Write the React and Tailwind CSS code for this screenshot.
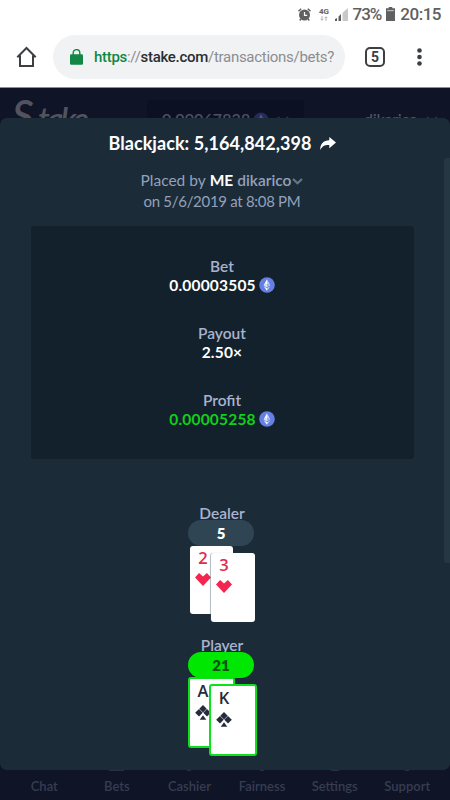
import React from 'react'

const stats = [
  { label: 'Bet', value: '0.00003505', coin: true, color: 'text-white' },
  { label: 'Payout', value: '2.50×', coin: false, color: 'text-white' },
  { label: 'Profit', value: '0.00005258', coin: true, color: 'text-[#10d01a]' },
]

const tabs = [
  { name: 'Chat' },
  { name: 'Bets', edge: 'w-[15px]' },
  { name: 'Cashier', edge: 'w-1' },
  { name: 'Fairness', edge: 'w-1' },
  { name: 'Settings', edge: 'w-2' },
  { name: 'Support', edge: 'w-1' },
]

function EthIcon() {
  return (
    <svg className="size-4 shrink-0" viewBox="0 0 16 16">
      <circle cx="8" cy="8" r="7.8" fill="#6580e3" />
      <path d="M8 2.2v4.6l3.4 1.6z" fill="#c4cff7" />
      <path d="M8 2.2L4.6 8.4 8 6.8z" fill="#fff" />
      <path d="M8 6.8L4.6 8.4 8 10.5z" fill="#dbe2fb" />
      <path d="M8 6.8v3.7l3.4-2.1z" fill="#a3b3f0" />
      <path d="M4.6 9.2L8 13.8v-2.6z" fill="#fff" />
      <path d="M11.4 9.2L8 13.8v-2.6z" fill="#c4cff7" />
    </svg>
  )
}

function Heart() {
  return (
    <svg className="mt-[3px] h-[13px] w-4 shrink-0" viewBox="0 0 16 13" fill="#f4254f">
      <path d="M4.1 0L8 3.4 11.9 0 16 4.5 8 13 0 4.5z" />
    </svg>
  )
}

function Club() {
  return (
    <svg className="mt-[2px] h-[15px] w-4 shrink-0" viewBox="0 0 16 15" fill="#262a3d">
      <path d="M8 0l3.7 3.7L8 7.4 4.3 3.7z" />
      <path d="M4 4.1l3.7 3.7L4 11.5.2 7.8z" />
      <path d="M12 4.1l3.8 3.7-3.8 3.7-3.7-3.7z" />
      <path d="M8 10.3l3.3 4.5H4.7z" />
    </svg>
  )
}

function Card({ rank, suit, className }) {
  return (
    <div className={`absolute rounded-[3px] bg-white ${className}`}>
      <div className="flex w-[26px] flex-col items-center">
        <span
          className={`font-['Open_Sans',sans-serif] text-[16.5px] leading-[24px] font-semibold ${
            suit === 'heart' ? 'text-[#e02b50]' : 'text-[#262a3d]'
          }`}
        >
          {rank}
        </span>
        {suit === 'heart' ? <Heart /> : <Club />}
      </div>
    </div>
  )
}

function StatusBar() {
  return (
    <div className="flex h-7 items-center justify-end pr-[9px] text-[#606060]">
      <svg className="mr-[8px] size-[13px]" viewBox="0 0 13 13">
        <circle cx="6.5" cy="7" r="5.5" fill="#606060" />
        <path d="M.5 3.2L3.2.8M12.5 3.2L9.8.8M2.8 11l-1 1.5M10.2 11l1 1.5" stroke="#606060" strokeWidth="1.5" />
        <path d="M6.5 3.9v3.4h2.7" stroke="#fff" strokeWidth="1.2" fill="none" />
      </svg>
      <div className="mr-[5px] flex w-[11px] flex-col items-center">
        <span className="text-[8px] leading-[8px] font-bold">4G</span>
        <svg className="h-[5px] w-2" viewBox="0 0 8 5" stroke="#aaa" strokeWidth=".9" fill="none">
          <path d="M2 0v4M.6 2.8L2 4.3l1.4-1.5M6 5V1M4.6 2.2L6 .7l1.4 1.5" />
        </svg>
      </div>
      <svg className="mr-[5px] h-[13px] w-[13px]" viewBox="0 0 13 13">
        <path d="M0 13v-2l2-1v3zM3.5 13V8.5L6 6v7z" fill="#606060" />
        <path d="M7.5 13V4.7L13 0v13z" fill="#c9c9c9" />
      </svg>
      <span className="mr-[5px] text-[17px] leading-none font-medium tracking-[-1px]">73%</span>
      <svg className="mr-[5px] h-[14px] w-[9px]" viewBox="0 0 9 14">
        <path d="M2.7 0h3.6v1.3H9V14H0V1.3h2.7z" fill="#606060" />
        <path d="M1.2 3h6.6v1.2H1.2z" fill="#b9b9b9" />
      </svg>
      <span className="text-[17px] leading-none font-medium tracking-[-0.5px]">20:15</span>
    </div>
  )
}

function AddressBar() {
  return (
    <div className="flex h-[58px] items-center">
      <svg className="ml-[16px] h-[22px] w-[21px] shrink-0" viewBox="0 0 21 22" fill="none" stroke="#3c4043" strokeWidth="2">
        <path d="M1.3 11.2L10.5 2l9.2 9.2M4 9.5V20h13V9.5" />
      </svg>
      <div className="ml-4 flex h-11 w-[292px] shrink-0 items-center rounded-full bg-[#f1f2f4] pl-[17px]">
        <svg className="h-4 w-[13px] shrink-0" viewBox="0 0 13 16">
          <rect y="5.2" width="13" height="10.6" rx="1.3" fill="#128844" />
          <path d="M3.2 6V3.9a3.3 3.3 0 016.6 0V6" fill="none" stroke="#128844" strokeWidth="1.4" />
        </svg>
        <span className="ml-[11px] text-[15px] tracking-[-0.29px] whitespace-nowrap text-[#8b8d90]">
          <span className="font-medium text-[#128844]">https</span>://
          <span className="font-medium text-[#2b2d30]">stake.com</span>/transactions/bets?
        </span>
      </div>
      <div className="ml-[20px] flex size-5 shrink-0 items-center justify-center rounded-[5px] border-2 border-[#3c4043] text-[14px] leading-none font-bold text-[#3c4043]">
        5
      </div>
      <svg className="ml-[32px] h-[18px] w-[5px] shrink-0" viewBox="0 0 5 18" fill="#3c4043">
        <circle cx="2.5" cy="2.5" r="2.3" />
        <circle cx="2.5" cy="9" r="2.3" />
        <circle cx="2.5" cy="15.5" r="2.3" />
      </svg>
    </div>
  )
}

function SiteHeader() {
  return (
    <div className="flex h-[30px] items-start overflow-hidden text-[#4c5165]">
      <div className="flex w-[147px] items-baseline pt-[7px] pl-3 leading-[40px] font-semibold text-[#51535f] italic">
        <span className="w-[26px] text-[42px]">S</span>
        <span className="text-[33px] tracking-[-3px]">take</span>
      </div>
      <div className="mt-3 flex h-10 w-[157px] items-start rounded-[4px] bg-[#0c1023] pt-[9px] pl-[15px]">
        <span className="w-[88px] text-[16px] leading-5 font-semibold tracking-[0.1px]">0.00067838</span>
        <svg className="mt-[3px] ml-[3px] size-4" viewBox="0 0 16 16">
          <circle cx="8" cy="8" r="7.5" fill="#252b59" />
          <path d="M8 2L4.7 8.2 8 10.3l3.3-2.1z" fill="#4c5280" />
        </svg>
        <svg className="mt-[7px] ml-2 h-2 w-3" viewBox="0 0 12 8" fill="none" stroke="#2c3146" strokeWidth="2">
          <path d="M1 1l5 5 5-5" />
        </svg>
      </div>
      <span className="mt-[21px] ml-[60px] w-[54px] text-[16px] leading-5 font-semibold tracking-[-0.3px]">dikarico</span>
      <svg className="mt-[28px] ml-2 h-2 w-3" viewBox="0 0 12 8" fill="none" stroke="#2c3146" strokeWidth="2">
        <path d="M1 1l5 5 5-5" />
      </svg>
    </div>
  )
}

function Hand({ name, score, pill, children }) {
  return (
    <div className="mr-[2px] flex w-[70px] flex-col items-center">
      <span className="ml-[2px] text-[15.5px] leading-[14px] font-semibold text-[#a9b3cf]">{name}</span>
      <div className={`flex h-[26px] w-[66px] items-center justify-center rounded-full text-[15px] font-extrabold ${pill}`}>
        {score}
      </div>
      <div className="relative h-[80px] w-[66px]">{children}</div>
    </div>
  )
}

function BetModal() {
  return (
    <div className="flex h-[652px] rounded-[7px] bg-[#1b2c38]">
      <div className="flex w-[444px] flex-col items-center">
        <div className="mt-[15px] flex h-5 items-center text-white">
          <span className="text-[18px] font-bold tracking-[0.06px] whitespace-nowrap">Blackjack: 5,164,842,398</span>
          <svg className="ml-2 h-[13px] w-4" viewBox="0 0 16 13" fill="currentColor">
            <path d="M9.3 0L16 5.6l-6.7 5.7V8C5 7.8 2.3 9 .2 13 .1 7 3.4 3.5 9.3 3.3z" />
          </svg>
        </div>
        <div className="mt-[17px] flex h-[21px] items-center text-[15.5px] whitespace-nowrap text-[#94a0bb]">
          <span>Placed by</span>
          <span className="ml-1 font-bold text-white">ME</span>
          <span className="ml-1 font-semibold">dikarico</span>
          <svg className="mt-[2px] ml-px h-[7px] w-[11px]" viewBox="0 0 11 7" fill="none" stroke="#66748b" strokeWidth="2.2">
            <path d="M1 1l4.5 4.3L10 1" />
          </svg>
        </div>
        <div className="h-[21px] text-[15px] leading-[20px] tracking-[-0.3px] whitespace-nowrap text-[#94a0bb]">
          on 5/6/2019 at 8:08 PM
        </div>

        <div className="mt-[14px] flex h-[233px] w-[383px] flex-col items-center gap-[29px] rounded-[3px] bg-[#12212b] pt-[31px]">
          {stats.map((s) => (
            <div key={s.label} className="flex h-[38px] flex-col items-center">
              <span className="text-[15.5px] leading-[19px] font-semibold text-[#a9b3cf]">{s.label}</span>
              <div className={`flex h-[18px] items-center gap-[3px] text-[15.5px] leading-[18px] font-bold tracking-[0.2px] ${s.color}`}>
                <span>{s.value}</span>
                {s.coin && <EthIcon />}
              </div>
            </div>
          ))}
        </div>

        <div className="mt-[47px]">
          <Hand name="Dealer" score="5" pill="bg-[#2f4553] text-white">
            <Card rank="2" suit="heart" className="top-0 left-[2px] h-[68px] w-[43px]" />
            <Card
              rank="3"
              suit="heart"
              className="top-[7px] left-[23px] h-[69px] w-[44px] shadow-[-1px_0_1px_rgba(60,80,100,0.4)]"
            />
          </Hand>
        </div>
        <div className="mt-[12px]">
          <Hand name="Player" score="21" pill="relative z-10 bg-[#00e701] text-[#0a5414]">
            <Card rank="A" suit="club" className="-top-px left-0 h-[71px] w-[47px] border-2 border-[#0ee01e]" />
            <Card rank="K" suit="club" className="top-[6px] left-[21px] h-[72px] w-[48px] border-2 border-[#0ee01e]" />
          </Hand>
        </div>
      </div>
      <div className="mt-[40px] h-[405px] w-[6px] rounded-l-[3px] bg-[#263744]" />
    </div>
  )
}

function App() {
  return (
    <div className="h-[800px] w-[450px] overflow-hidden bg-[#0f1427] font-['Lato','Open_Sans',sans-serif]">
      <div className="h-[88px] border-b border-[#8b909a] bg-white font-['Roboto',sans-serif]">
        <StatusBar />
        <AddressBar />
      </div>
      <SiteHeader />
      <BetModal />
      <div className="flex h-[30px] w-[450px] items-start pl-[8px] text-[#373d51]">
        {tabs.map((tab) => (
          <div key={tab.name} className="flex w-[72.6px] shrink-0 flex-col items-center text-[13px] leading-[18px] font-semibold">
            <div className={`mb-[6px] h-px bg-[#2a3042] ${tab.edge || 'w-0'}`} />
            {tab.name}
          </div>
        ))}
      </div>
    </div>
  )
}

export default App
